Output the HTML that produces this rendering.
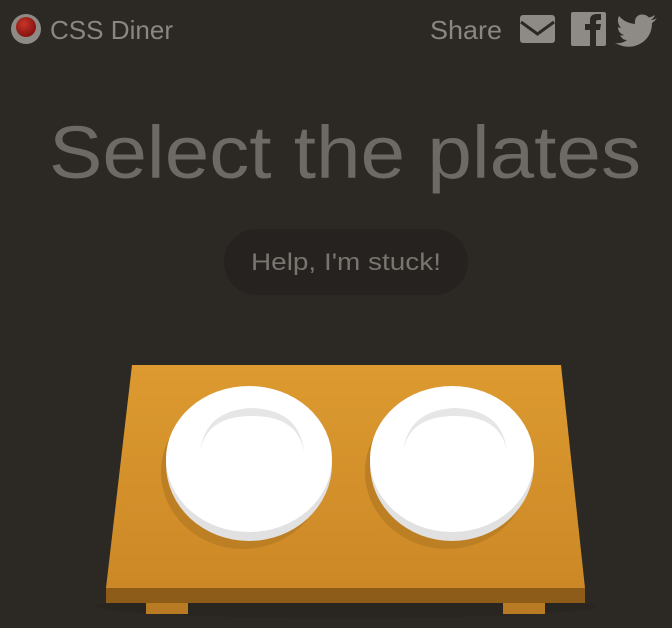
<!DOCTYPE html>
<html><head><meta charset="utf-8"><style>
html,body{margin:0;padding:0;background:#2c2823;width:672px;height:628px;overflow:hidden}
svg{display:block}
text{font-family:"Liberation Sans",sans-serif}
</style></head><body>
<svg width="672" height="628" viewBox="0 0 672 628" xmlns="http://www.w3.org/2000/svg">
<defs>
<linearGradient id="tt" x1="0" y1="0" x2="0" y2="1"><stop offset="0" stop-color="#dc9a30"/><stop offset="1" stop-color="#cc8826"/></linearGradient>
<radialGradient id="ball" cx="0.4" cy="0.35" r="0.6"><stop offset="0" stop-color="#c8342a"/><stop offset="1" stop-color="#8a1510"/></radialGradient>
</defs>
<rect width="672" height="628" fill="#2c2823"/>
<circle cx="26" cy="29" r="15" fill="#8e8a85"/>
<circle cx="26" cy="27" r="10" fill="url(#ball)"/>
<text x="50" y="39" font-size="26" fill="#8a8681" textLength="123" lengthAdjust="spacingAndGlyphs">CSS Diner</text>
<text x="430" y="39" font-size="26" fill="#8a8681" textLength="72" lengthAdjust="spacingAndGlyphs">Share</text>
<rect x="520" y="15" width="35" height="28" rx="3" fill="#8e8a85"/>
<path d="M521 22 L537.5 34 L554 22" fill="none" stroke="#2c2823" stroke-width="3"/>
<rect x="571" y="12" width="35" height="34" rx="2" fill="#8e8a85"/>
<path d="M590 46 V30 H585 V24 H590 V20 Q590 14 597 14 H601 V20 H598 Q596 20 596 22 V24 H601 L600 30 H596 V46 Z" fill="#2c2823"/>
<path d="M657 18 Q654 20 651 20 Q654 18 655 15 Q652 17 649 17.5 Q646 14 641 14.5 Q634 16 635 24 Q625 23 619 16 Q616 22 621 28 Q619 28 618 27 Q618 33 624 35 Q622 36 620 35 Q622 40 627 40 Q622 44 615 43 Q630 51 643 42 Q652 35 652 23 Q655 21 657 18 Z" fill="#8e8a85"/>
<text x="49" y="178" font-size="74" fill="#6d6964" textLength="592" lengthAdjust="spacingAndGlyphs">Select the plates</text>
<rect x="224" y="229" width="244" height="66" rx="33" fill="#252220"/>
<text x="251" y="270" font-size="24" fill="#78746e" textLength="190" lengthAdjust="spacingAndGlyphs">Help, I'm stuck!</text>
<ellipse cx="346" cy="606" rx="250" ry="12" fill="#25221e" opacity="0.5"/>
<rect x="146" y="600" width="42" height="14" fill="#b87a22"/>
<rect x="503" y="600" width="42" height="14" fill="#b87a22"/>
<polygon points="132,365 561,365 585,588 106,588" fill="url(#tt)"/>
<polygon points="106,588 585,588 585,603 106,603" fill="#8d5c18"/>
<ellipse cx="243" cy="472" rx="82" ry="77" fill="#bd7f24"/>
<ellipse cx="447" cy="472" rx="82" ry="77" fill="#bd7f24"/>
<ellipse cx="249" cy="464" rx="83" ry="77" fill="#e1e1e1"/>
<ellipse cx="249" cy="459" rx="83" ry="73" fill="#ffffff"/>
<path d="M200 452 Q205 410 252 408 Q300 410 304 452 Q298 416 252 416 Q206 416 200 452Z" fill="#e6e6e6"/>
<ellipse cx="452" cy="464" rx="82" ry="77" fill="#e1e1e1"/>
<ellipse cx="452" cy="459" rx="82" ry="73" fill="#ffffff"/>
<path d="M403 452 Q408 410 455 408 Q503 410 507 452 Q501 416 455 416 Q409 416 403 452Z" fill="#e6e6e6"/>
</svg>
</body></html>
